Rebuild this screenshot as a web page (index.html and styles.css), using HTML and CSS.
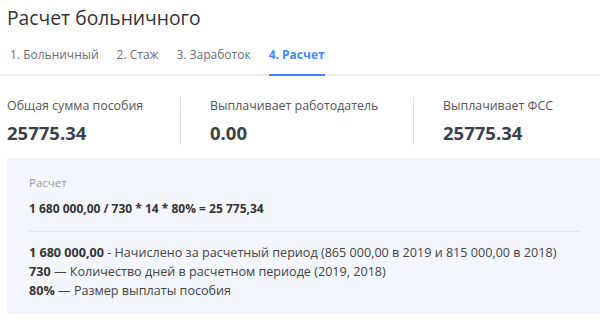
FILE: index.html
```html
<!DOCTYPE html>
<html lang="ru">
<head>
    <meta charset="UTF-8">
    <title>Расчет больничного</title>
    <link rel="stylesheet" href="styles.css">
</head>
<body>
    <div class="page">
        <h1 class="title">Расчет больничного</h1>

        <!-- Steps -->
        <nav class="tabs">
            <span class="tab">1. Больничный</span>
            <span class="tab">2. Стаж</span>
            <span class="tab">3. Заработок</span>
            <span class="tab active">4. Расчет</span>
        </nav>

        <!-- Totals -->
        <div class="totals">
            <div class="total">
                <div class="total-label">Общая сумма пособия</div>
                <div class="total-value">25775.34</div>
            </div>
            <div class="total">
                <div class="total-label">Выплачивает работодатель</div>
                <div class="total-value">0.00</div>
            </div>
            <div class="total">
                <div class="total-label">Выплачивает ФСС</div>
                <div class="total-value">25775.34</div>
            </div>
        </div>

        <!-- Calculation -->
        <div class="calc">
            <div class="calc-label">Расчет</div>
            <div class="calc-formula">1 680 000,00 / 730 * 14 * 80% = 25 775,34</div>
            <div class="calc-notes">
                <p><b>1 680 000,00</b> - Начислено за расчетный период (865 000,00 в 2019 и 815 000,00 в 2018)</p>
                <p><b>730</b> — Количество дней в расчетном периоде (2019, 2018)</p>
                <p><b>80%</b> — Размер выплаты пособия</p>
            </div>
        </div>
    </div>
</body>
</html>
```

FILE: styles.css
```css
body {
    margin: 0;
    background: #fff;
    font-family: "Open Sans", "Noto Sans", sans-serif;
    color: #333740;
}

.page {
    padding-top: 5px;
}

/* Header */
.title {
    margin: 0 0 0 7px;
    font-size: 19.3px;
    font-weight: 400;
    line-height: 26px;
    color: #333;
}

/* Tabs */
.tabs {
    display: flex;
    gap: 18px;
    padding: 0 10px;
    margin-top: 9px;
    border-bottom: 2px solid #eceef3;
}

.tab {
    font-size: 12px;
    line-height: 15px;
    padding: 7px 0 12px;
    color: #6b6e75;
    margin-bottom: -2px;
    border-bottom: 2px solid transparent;
}

.tab.active {
    color: #3d8bfd;
    font-weight: 700;
    border-bottom-color: #3d8bfd;
}

/* Totals */
.totals {
    display: flex;
    padding: 21px 0 13px;
}

.total {
    padding-left: 7px;
}

.total:first-child {
    width: 173px;
    border-right: 1px solid #dde1ea;
}

.total:nth-child(2) {
    width: 203px;
    padding-left: 29px;
    border-right: 1px solid #dde1ea;
}

.total:nth-child(3) {
    padding-left: 29px;
}

.total-label {
    font-size: 12.4px;
    color: #555;
    line-height: 17px;
}

.total-value {
    margin-top: 7px;
    font-size: 18.5px;
    font-weight: 700;
    color: #3b404a;
    line-height: 24px;
}

/* Calculation panel */
.calc {
    margin-left: 7px;
    background: #f3f6fd;
    padding: 17px 19px 14px 22px;
}

.calc-label {
    font-size: 11.5px;
    color: #9a9ca3;
    line-height: 15px;
}

.calc-formula {
    margin-top: 11px;
    font-size: 12px;
    font-weight: 700;
    color: #333;
    line-height: 15px;
    padding-bottom: 15px;
    border-bottom: 1px solid #e4e6ee;
}

.calc-notes {
    padding-top: 11px;
}

.calc-notes p {
    margin: 0;
    font-size: 12.6px;
    line-height: 19px;
    color: #444;
}

.calc-notes b {
    color: #333;
}
```
